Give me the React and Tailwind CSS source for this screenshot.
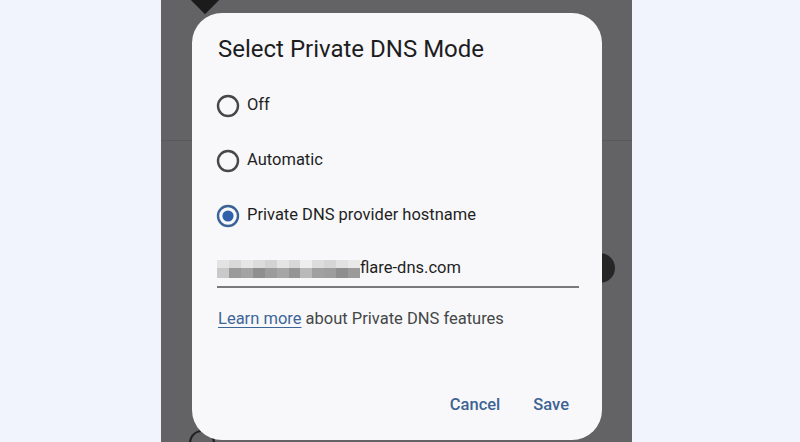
import React from 'react';

const font = { fontFamily: 'Roboto, "Noto Sans", sans-serif' };

function Radio({ checked }) {
	return (
		<svg width="24" height="24" viewBox="0 0 24 24" className="shrink-0">
			<circle cx="12" cy="12" r="10" fill="none" stroke={checked ? '#3a6396' : '#474747'} strokeWidth="2.4" />
			{checked && <circle cx="12" cy="12" r="5.6" fill="#2f62a8" />}
		</svg>
	);
}

function Option({ label, checked }) {
	return (
		<div className="h-[55px] flex items-center gap-[7px] -ml-[2px]">
			<Radio checked={checked} />
			<span className="text-[16.5px] text-[#1f1f1f]">{label}</span>
		</div>
	);
}

// pixelated, blurred part of the hostname
const topRow = ['#e3e3e3', '#d9d9d9', '#e6e6e6', '#dcdcdc', '#d3d3d3', '#e4e4e4', '#d8d8d8', '#eeeeee', '#dddddd', '#d6d6d6', '#e2e2e2', '#e9e9e9'];
const bottomRow = ['#c9c9c9', '#9a9a9a', '#a3a3a3', '#8f8f8f', '#9c9c9c', '#a6a6a6', '#959595', '#b9b9b9', '#a0a0a0', '#9d9d9d', '#8e8e8e', '#9b9b9b'];

function Blur() {
	return (
		<div className="flex flex-col w-[143px] h-[18px]">
			<div className="flex h-[8px]">
				{topRow.map((c, i) => <div key={i} className="flex-1" style={{ background: c }} />)}
			</div>
			<div className="flex h-[10px]">
				{bottomRow.map((c, i) => <div key={i} className="flex-1" style={{ background: c }} />)}
			</div>
		</div>
	);
}

export default function App() {
	return (
		<div className="w-[800px] h-[442px] bg-[#f1f4fc] overflow-hidden pl-[161px]" style={font}>
			<div className="relative w-[471px] h-[442px] bg-[#636365] pt-[13px] pl-[31px]">
				{/* things behind the dialog */}
				<div className="absolute left-[34px] -top-[10px] w-[20px] h-[20px] bg-[#1b1b1b] rotate-45" />
				<div className="absolute left-0 right-0 top-[140px] h-px bg-[#59595b]" />
				<div className="absolute left-[424px] top-[253px] w-[30px] h-[30px] rounded-full bg-[#262626]" />
				<div className="absolute left-[28px] top-[430px] w-[26px] h-[26px] rounded-full border-2 border-[#222]" />

				<div className="relative w-[410px] h-[427px] bg-[#f8f8fa] rounded-[30px] flex flex-col pl-[26px] pr-[23px] pt-[20px]">
					<h1 className="h-8 leading-8 text-[24px] text-[#1d1d1f]">Select Private DNS Mode</h1>
					<div className="mt-[13px] flex flex-col">
						<Option label="Off" />
						<Option label="Automatic" />
						<Option label="Private DNS provider hostname" checked />
					</div>
					<div className="h-[45px] pt-[8px] border-b-2 border-[#7a7a7c] flex items-center -ml-[1px]">
						<Blur />
						<span className="text-[16.5px] text-[#1f1f1f]">flare-dns.com</span>
					</div>
					<p className="mt-[19px] h-6 leading-6 text-[16.5px] text-[#444746]">
						<span className="underline underline-offset-[3px] text-[#3d6698]">Learn more</span> about Private DNS features
					</p>
					<div className="mt-auto mb-[15px] h-10 flex items-center justify-end gap-[33px] pr-[10px] text-[16.5px] font-medium text-[#3d6392]">
						<span>Cancel</span>
						<span>Save</span>
					</div>
				</div>
			</div>
		</div>
	);
}
